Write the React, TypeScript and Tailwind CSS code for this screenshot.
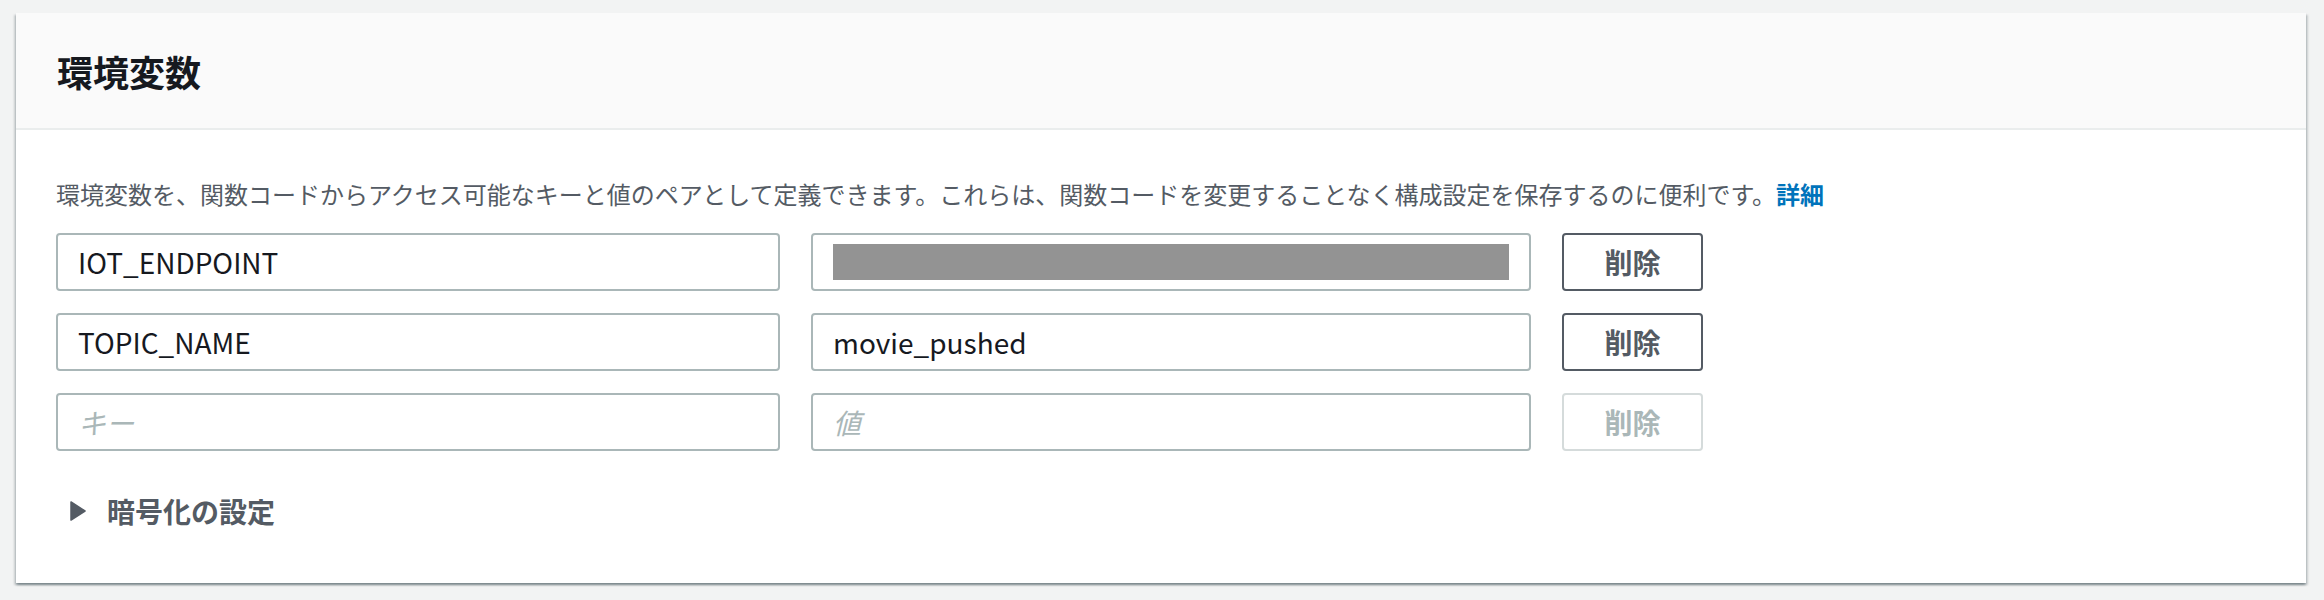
import React from "react";

const font = { fontFamily: '"Noto Sans CJK JP", "Noto Sans", sans-serif' };

interface EnvRow {
  key: string;
  value: string;
  redacted?: boolean;
}

const rows: EnvRow[] = [
  { key: "IOT_ENDPOINT", value: "", redacted: true },
  { key: "TOPIC_NAME", value: "movie_pushed" },
];

function TextBox({ children, placeholder }: { children?: React.ReactNode; placeholder?: string }) {
  return (
    <div className="relative flex h-[58px] items-center rounded-[4px] border-2 border-[#aab7b8] bg-white px-[20px] text-[28px] text-[#16191f]">
      {children ?? <span className="italic text-[#aab7b8]">{placeholder}</span>}
    </div>
  );
}

function RemoveButton({ disabled }: { disabled?: boolean }) {
  return (
    <button
      className={
        disabled
          ? "h-[58px] w-[141px] rounded-[4px] border-2 border-[#d5dbdb] bg-white text-[28px] font-bold text-[#aab7b8]"
          : "h-[58px] w-[141px] rounded-[4px] border-2 border-[#545b64] bg-white text-[28px] font-bold text-[#545b64]"
      }
    >
      削除
    </button>
  );
}

export default function App() {
  return (
    <div className="min-h-[600px] bg-[#f2f3f3] pl-[16px] pr-[18px] pt-[13px]" style={font}>
      <div className="bg-white shadow-[0_2px_2px_0_rgba(0,28,36,0.3),2px_2px_2px_0_rgba(0,28,36,0.15),-2px_2px_2px_0_rgba(0,28,36,0.15)]">
        {/* Header */}
        <div className="flex h-[117px] items-center border-b-2 border-[#eaeded] bg-[#fafafa] px-[41px]">
          <h2 className="text-[36px] font-bold text-[#16191f]">環境変数</h2>
        </div>

        {/* Body */}
        <div className="px-[40px] pb-[54px] pt-[46px]">
          <p className="text-[24px] leading-[36px] text-[#545b64]">
            環境変数を、関数コードからアクセス可能なキーと値のペアとして定義できます。これらは、関数コードを変更することなく構成設定を保存するのに便利です。
            <a className="font-bold text-[#0073bb]">詳細</a>
          </p>

          <div className="mt-[21px] flex flex-col gap-[22px]">
            {rows.map((row) => (
              <div key={row.key} className="flex items-center gap-[31px]">
                <div className="w-[724px]">
                  <TextBox>{row.key}</TextBox>
                </div>
                <div className="w-[720px]">
                  <TextBox>
                    {row.redacted ? <div className="h-[36px] w-full bg-[#939393]" /> : row.value}
                  </TextBox>
                </div>
                <RemoveButton />
              </div>
            ))}
            <div className="flex items-center gap-[31px]">
              <div className="w-[724px]">
                <TextBox placeholder="キー" />
              </div>
              <div className="w-[720px]">
                <TextBox placeholder="値" />
              </div>
              <RemoveButton disabled />
            </div>
          </div>

          <div className="mt-[42px] flex items-center gap-[21px] pl-[14px] text-[28px] font-bold leading-[36px] text-[#545b64]">
            <svg width="16" height="20" viewBox="0 0 16 20">
              <path d="M1 1 L15 10 L1 19 Z" fill="#545b64" stroke="#545b64" strokeWidth="1.5" strokeLinejoin="round" />
            </svg>
            <span>暗号化の設定</span>
          </div>
        </div>
      </div>
    </div>
  );
}
